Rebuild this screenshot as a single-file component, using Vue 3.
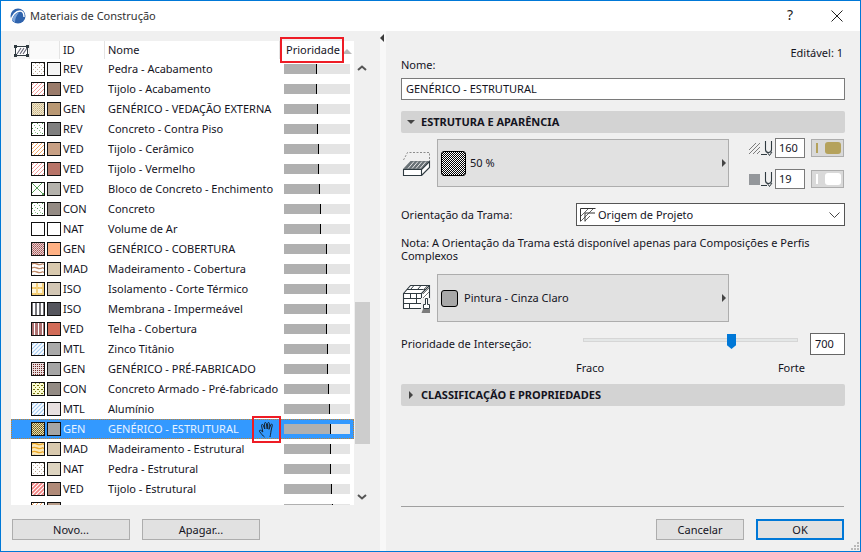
<script setup>
const rows = [
  ['REV', 'Pedra - Acabamento', 'dots', '#f4f4f4', 33],
  ['VED', 'Tijolo - Acabamento', 'diagred', '#9a7b6a', 33],
  ['GEN', 'GENÉRICO - VEDAÇÃO EXTERNA', 'weave', '#b99873', 34],
  ['REV', 'Concreto - Contra Piso', 'green', '#7f7f7f', 34],
  ['VED', 'Tijolo - Cerâmico', 'diagorange', '#c8a084', 35],
  ['VED', 'Tijolo - Vermelho', 'diagred', '#b87468', 35],
  ['VED', 'Bloco de Concreto - Enchimento', 'cross', '#b4b2ac', 36],
  ['CON', 'Concreto', 'green', '#948b84', 37],
  ['NAT', 'Volume de Ar', 'none', '#ffffff', 37],
  ['GEN', 'GENÉRICO - COBERTURA', 'checkred', '#ffb184', 43],
  ['MAD', 'Madeiramento - Cobertura', 'wavebrown', '#d8c9ae', 43],
  ['ISO', 'Isolamento - Corte Térmico', 'hex', '#d2c6b4', 43],
  ['ISO', 'Membrana - Impermeável', 'stripegray', '#55565e', 43],
  ['VED', 'Telha - Cobertura', 'stripered', '#d26c58', 43],
  ['MTL', 'Zinco Titânio', 'diagblue', '#a9a9a9', 44],
  ['GEN', 'GENÉRICO - PRÉ-FABRICADO', 'checkdark', '#a5a5a5', 44],
  ['CON', 'Concreto Armado - Pré-fabricado', 'olive', '#938b84', 45],
  ['MTL', 'Alumínio', 'diagblue', '#e8e0e0', 46],
  ['GEN', 'GENÉRICO - ESTRUTURAL', 'checkolive', '#a5a5a5', 47],
  ['MAD', 'Madeiramento - Estrutural', 'waveorange', '#d8c9ae', 47],
  ['NAT', 'Pedra - Estrutural', 'dots', '#ddd4c0', 47],
  ['VED', 'Tijolo - Estrutural', 'diagthick', '#b08a78', 48],
  ['VED', 'Bloco de Vedação - Estrutural', 'diagorange', '#b89c88', 49]
].map(([id, name, pattern, color, fill]) => ({ id, name, pattern, color, fill }))
const selectedIndex = 18
</script>

<template>
  <div class="window">
    <svg class="defs" width="0" height="0" aria-hidden="true">
      <defs>
        <pattern id="dots" width="4" height="4" patternUnits="userSpaceOnUse"><rect x="0" y="1" width="1" height="1" fill="#b5a08c"/><rect x="2" y="3" width="1" height="1" fill="#c9b8a6"/></pattern>
        <pattern id="green" width="5" height="5" patternUnits="userSpaceOnUse"><rect x="1" y="1" width="1" height="1" fill="#4f9a4f"/><rect x="3" y="3" width="1" height="1" fill="#7fb87f"/><rect x="4" y="0" width="1" height="1" fill="#a0c8a0"/></pattern>
        <pattern id="diagred" width="4" height="4" patternUnits="userSpaceOnUse"><path d="M-1 5L5 -1M-1 1L1 -1M3 5L5 3" stroke="#f59a9a" stroke-width="1"/></pattern>
        <pattern id="diagthick" width="4" height="4" patternUnits="userSpaceOnUse"><path d="M-1 5L5 -1M-1 1L1 -1M3 5L5 3" stroke="#f28080" stroke-width="1.7"/></pattern>
        <pattern id="diagorange" width="4" height="4" patternUnits="userSpaceOnUse"><path d="M-1 5L5 -1M-1 1L1 -1M3 5L5 3" stroke="#f5a868" stroke-width="1"/></pattern>
        <pattern id="diagblue" width="4" height="4" patternUnits="userSpaceOnUse"><path d="M-1 5L5 -1M-1 1L1 -1M3 5L5 3" stroke="#a4ccf4" stroke-width="1.2"/></pattern>
        <pattern id="weave" width="2" height="2" patternUnits="userSpaceOnUse"><rect width="2" height="2" fill="#efe6cc"/><rect width="1" height="1" fill="#c8b384"/><rect x="1" y="1" width="1" height="1" fill="#d8c8a0"/></pattern>
        <pattern id="cross" width="12" height="12" patternUnits="userSpaceOnUse"><path d="M0 0L12 12M12 0L0 12" stroke="#5aa05a" stroke-width="1"/></pattern>
        <pattern id="checkred" width="2" height="2" patternUnits="userSpaceOnUse"><rect width="2" height="2" fill="#e8d0d0"/><rect width="1" height="1" fill="#a85858"/><rect x="1" y="1" width="1" height="1" fill="#b87878"/></pattern>
        <pattern id="checkdark" width="2" height="2" patternUnits="userSpaceOnUse"><rect width="2" height="2" fill="#eadede"/><rect width="1" height="1" fill="#6e2828"/></pattern>
        <pattern id="checkolive" width="2" height="2" patternUnits="userSpaceOnUse"><rect width="2" height="2" fill="#e8dcb0"/><rect width="1" height="1" fill="#6a5a20"/><rect x="1" y="1" width="1" height="1" fill="#8a7a30"/></pattern>
        <pattern id="wavebrown" width="12" height="4" patternUnits="userSpaceOnUse"><path d="M0 2.500Q3 0.500 6 2T12 1.500" fill="none" stroke="#c08a68" stroke-width="1.400"/></pattern>
        <pattern id="waveorange" width="12" height="4" patternUnits="userSpaceOnUse"><rect width="12" height="4" fill="#fbe8b8"/><path d="M0 2.500Q3 0.500 6 2T12 1.500" fill="none" stroke="#eda92a" stroke-width="1.400"/></pattern>
        <pattern id="hex" width="6" height="6" patternUnits="userSpaceOnUse"><rect width="6" height="6" fill="#fff6dc"/><path d="M0 1.500L1.500 0H4.500L6 1.500V4.500L4.500 6H1.500L0 4.500Z" fill="none" stroke="#eaa818" stroke-width="1"/></pattern>
        <pattern id="stripegray" width="4" height="4" patternUnits="userSpaceOnUse"><rect width="2" height="4" fill="#76767c"/></pattern>
        <pattern id="stripered" width="4" height="4" patternUnits="userSpaceOnUse"><rect width="3" height="4" fill="#ad7070"/></pattern>
        <pattern id="olive" width="4" height="4" patternUnits="userSpaceOnUse"><rect width="4" height="4" fill="#fbfbd0"/><rect x="0" y="1" width="1" height="1" fill="#8a8a10"/><rect x="2" y="3" width="2" height="1" fill="#6e6e10"/></pattern>
      </defs>
    </svg>

    <header class="titlebar">
      <svg class="logo" width="16" height="16" viewBox="0 0 16 16">
        <circle cx="8" cy="8" r="7.500" fill="#2f63ad"/>
        <path d="M1 13C2 7 6 3 10 3c2 0 4 2 4 6" fill="none" stroke="#fff" stroke-width="1.400"/>
        <path d="M2 12C3 8 6 5 9 4.500 6 8 5 11 5 14.500Z" fill="#7ea5da"/>
      </svg>
      <span class="title">Materiais de Construção</span>
      <span class="help">?</span>
      <svg class="close" width="12" height="12" viewBox="0 0 12 12"><path d="M.5.5l11 11M11.500.5l-11 11" stroke="#222" stroke-width="1" fill="none"/></svg>
    </header>

    <div class="body">
      <section class="left">
        <div class="table-area">
          <div class="table">
            <div class="thead">
              <div class="th th-icon">
                <svg width="15" height="12" viewBox="0 0 15 12">
                  <rect x="1.500" y="1.500" width="12" height="9" fill="#fff" stroke="#2f3a40"/>
                  <path d="M3 9l4-6M6 9l4-6M9 9l4-6" stroke="#667" stroke-width="1.200"/>
                  <path d="M0 0h3v3H0zM12 0h3v3h-3zM0 9h3v3H0zM12 9h3v3h-3z" fill="#2f3a40"/>
                </svg>
              </div>
              <div class="th th-swatch"></div>
              <div class="th th-id">ID</div>
              <div class="th th-name">Nome</div>
              <div class="th th-prio">Prioridade<span class="sort"></span></div>
            </div>
            <div class="rows">
              <div
                v-for="(row, i) in rows"
                :key="i"
                class="row"
                :class="{ selected: i === selectedIndex }"
              >
                <svg class="chip" width="14" height="14" viewBox="0 0 14 14">
                  <rect x="0.500" y="0.500" width="13" height="13" fill="#fff" stroke="#111"/>
                  <rect v-if="row.pattern !== 'none'" x="1" y="1" width="12" height="12" :fill="`url(#${row.pattern})`"/>
                </svg>
                <span class="fill-chip" :style="{ background: row.color }"></span>
                <span class="cell-id">{{ row.id }}</span>
                <span class="cell-name">{{ row.name }}</span>
                <span class="bar">
                  <span class="bar-fill" :style="{ width: row.fill + 'px' }"></span>
                </span>
              </div>
            </div>
            <div class="annot annot-prio"></div>
            <div class="annot annot-hand">
              <svg width="18" height="17" viewBox="0 0 18 17">
                <path d="M6.500 16c-1.500-1-3-3-5-5.500-.6-1 .6-1.800 1.500-1l1.800 1.500L3.500 4.500c-.2-1.200 1.300-1.500 1.700-.4L6.800 8 6.500 2.500c0-1.200 1.600-1.300 1.800-.1L9.200 8 9.700 2.300c.2-1.100 1.700-1 1.700.2L11 8.300l1.800-4.600c.4-1 1.800-.6 1.500.5L13 10c-.3 2.500-.5 4-1 6" fill="none" stroke="#16222e" stroke-width="1"/>
              </svg>
            </div>
          </div>
          <div class="scrollbar">
            <svg class="sb-up" width="10" height="6" viewBox="0 0 10 6"><path d="M1 5l4-3.500L9 5" fill="none" stroke="#555" stroke-width="2"/></svg>
            <div class="sb-thumb"></div>
            <svg class="sb-down" width="10" height="6" viewBox="0 0 10 6"><path d="M1 1l4 3.500L9 1" fill="none" stroke="#555" stroke-width="2"/></svg>
          </div>
        </div>
        <div class="left-buttons">
          <button class="btn btn-left">Novo...</button>
          <button class="btn btn-left">Apagar...</button>
        </div>
      </section>

      <div class="splitter"><span class="split-arrow"></span></div>

      <section class="right">
        <div class="head">
          <label class="name-label">Nome:</label>
          <span class="editable">Editável: 1</span>
        </div>
        <div class="field name-field">GENÉRICO - ESTRUTURAL</div>

        <div class="section-head">
          <span class="tri-down"></span>ESTRUTURA E APARÊNCIA
        </div>

        <div class="struct-row">
          <svg class="big-icon" width="30" height="30" viewBox="0 0 30 30">
            <path d="M2.500 13L6.500 5.500H28.500V18" fill="none" stroke="#8c8c8c" stroke-dasharray="2 1.500"/>
            <path d="M2 22L9.500 14H28.500L20.500 22Z" fill="#6a7277"/>
            <path d="M7 21.500l6-7M11 21.500l6-7M15 21.500l6-7M19 21.500l6-7" stroke="#e8e8e8" stroke-width="1"/>
            <path d="M2.500 22.500H20.500V28.500H2.500ZM20.500 22.500L28.500 14.500V20.500L20.500 28.500" fill="#fff" stroke="#2f3a40" stroke-width="1.100"/>
          </svg>
          <button class="wide-btn">
            <span class="fill-sample checker"></span>
            <span class="wide-text pct">50 %</span>
            <span class="tri-right"></span>
          </button>
          <div class="pens">
            <div class="pen-row">
              <svg width="26" height="18" viewBox="0 0 26 18">
                <path d="M0 11L7 4M0 15L11 4M4 15L11 8M8 15L11 12" stroke="#7c7c7c" stroke-width="1"/>
                <path d="M16.500 2V10.500a3 3 0 0 0 6 0V2" fill="none" stroke="#2f3a40" stroke-width="1.100"/>
                <path d="M12 15.500H18M18 13l2.500 3.500L23 13" fill="none" stroke="#2f3a40" stroke-width="1"/>
              </svg>
              <span class="pen-input">160</span>
              <span class="pen-color"><i class="pen-line gold"></i><i class="pen-blob gold"></i></span>
            </div>
            <div class="pen-row">
              <svg width="26" height="18" viewBox="0 0 26 18">
                <rect x="0" y="4" width="11" height="11" fill="#94979b"/>
                <path d="M16.500 2V10.500a3 3 0 0 0 6 0V2" fill="none" stroke="#2f3a40" stroke-width="1.100"/>
                <path d="M12 15.500H18M18 13l2.500 3.500L23 13" fill="none" stroke="#2f3a40" stroke-width="1"/>
              </svg>
              <span class="pen-input">19</span>
              <span class="pen-color"><i class="pen-line white"></i><i class="pen-blob white"></i></span>
            </div>
          </div>
        </div>

        <div class="orient-row">
          <span class="orient-label">Orientação da Trama:</span>
          <div class="select">
            <svg width="16" height="14" viewBox="0 0 16 14">
              <path d="M.5 13.500V.5H15.500" fill="none" stroke="#333"/>
              <path d="M1 8L8 1M1 13L13 1M5 13L10 8" stroke="#666" stroke-width="1"/>
              <path d="M5 13.500V5H15" fill="none" stroke="#333"/>
            </svg>
            <span class="select-text">Origem de Projeto</span>
            <svg class="chev" width="11" height="6" viewBox="0 0 11 6"><path d="M.5.5l5 5 5-5" fill="none" stroke="#444"/></svg>
          </div>
        </div>

        <p class="note">Nota: A Orientação da Trama está disponível apenas para Composições e Perfis Complexos</p>

        <div class="struct-row surface-row">
          <svg class="big-icon brick" width="30" height="30" viewBox="0 0 30 30">
            <path d="M2.500 9.500L9.500 1.500H28.500V16L20.500 24.500H2.500ZM2.500 9.500H20.500V24.500M20.500 9.500L28.500 1.500" fill="#fff" stroke="#2f3a40" stroke-width="1.100"/>
            <path d="M2.500 14.500H20.500M2.500 19.500H20.500M9.500 9.500V14.500M15.500 14.500V19.500M8.500 19.500V24.500M15.500 9.500V14.500M6 5.500H24.500M13 1.500L9.500 5.500M20 1.500L16.500 5.500" stroke="#2f3a40" fill="none" stroke-width="1"/>
            <path d="M22 6L26 2M22 10L28 4M22 14L28 8" stroke="#777"/>
            <rect x="20" y="14" width="9" height="15" fill="#f0f0f0"/>
            <path d="M24.500 14.500h2v6h2v4h-6v-4h2Z" fill="#fff" stroke="#2f3a40"/>
            <path d="M22 25H29V29H20.500Z" fill="#7c7c7c"/>
          </svg>
          <button class="wide-btn">
            <span class="fill-sample gray"></span>
            <span class="wide-text">Pintura - Cinza Claro</span>
            <span class="tri-right"></span>
          </button>
        </div>

        <div class="slider-row">
          <span class="slider-label">Prioridade de Interseção:</span>
          <div class="track"><span class="thumb"></span></div>
          <span class="slider-input">700</span>
        </div>
        <div class="slider-scale"><span>Fraco</span><span>Forte</span></div>

        <div class="section-head second">
          <span class="tri-small"></span>CLASSIFICAÇÃO E PROPRIEDADES
        </div>

        <div class="spacer"></div>
        <div class="footer">
          <button class="btn btn-foot">Cancelar</button>
          <button class="btn btn-foot primary">OK</button>
        </div>
      </section>
      <svg class="grip" width="10" height="10" viewBox="0 0 10 10">
        <path d="M7 1h2v2H7zM4 4h2v2H4zM7 4h2v2H7zM1 7h2v2H1zM4 7h2v2H4zM7 7h2v2H7z" fill="#b8b8b8"/>
      </svg>
    </div>
  </div>
</template>

<style>
html, body { margin: 0; padding: 0; background: #fff; }
</style>

<style scoped>
.window {
  position: relative;
  width: 861px;
  height: 552px;
  box-sizing: border-box;
  border: 1px solid #0078d7;
  display: flex;
  flex-direction: column;
  overflow: hidden;
  font-family: "Noto Sans", "DejaVu Sans", sans-serif;
  font-size: 11px;
  line-height: 14px;
  color: #14141e;
  background: #f0f0f0;
}
.defs { position: absolute; }
.titlebar {
  height: 30px;
  flex: none;
  background: #fff;
  display: flex;
  align-items: center;
  padding-left: 9px;
}
.logo { margin-right: 4px; margin-top: 0; }
.title { font-size: 11px; color: #333; }
.help { margin-left: auto; font-size: 14px; margin-right: 38px; color: #222; margin-top: -2px; }
.close { margin-right: 17px; }
.body { flex: 1; display: flex; position: relative; min-height: 0; }

.left { width: 379px; flex: none; padding: 10px 0 0 10px; box-sizing: border-box; }
.table-area { display: flex; height: 464px; }
.table { position: relative; width: 343px; height: 464px; background: #fff; flex: none; }
.thead { display: flex; height: 18px; background: #f7f7f7; }
.th { height: 18px; line-height: 18px; box-sizing: border-box; border-right: 1px solid #e4e4e4; background: #fff; }
.th-icon { width: 19px; background: #f5f5f5; padding: 3px 0 0 3px; }
.th-swatch { width: 30px; background: #fafafa; }
.th-id { width: 45px; padding-left: 3px; }
.th-name { width: 175px; padding-left: 3px; }
.th-prio { flex: 1; padding-left: 6px; border-right: 0; position: relative; }
.sort {
  position: absolute; right: 2px; top: 8px;
  border: 5px solid transparent; border-top: 0; border-bottom: 5px solid #b8b8b8;
}
.rows { height: 446px; overflow: hidden; }
.row {
  height: 20px;
  display: flex;
  align-items: center;
  padding-left: 20px;
  box-sizing: border-box;
  overflow: hidden;
}
.row.selected {
  background: #3399ff;
  color: #e9f3ff;
  outline: 1px dotted #c8812a;
  outline-offset: -1px;
}
.chip { flex: none; display: block; }
.fill-chip {
  width: 14px; height: 14px; box-sizing: border-box;
  border: 1px solid #111; margin-left: 2px; flex: none;
}
.cell-id { width: 47px; padding-left: 2px; box-sizing: border-box; flex: none; }
.cell-name { width: 176px; flex: none; white-space: nowrap; overflow: visible; }
.bar { width: 66px; height: 10px; background: #e4e4e4; flex: none; display: block; }
.bar-fill {
  display: block; height: 100%; background: #b0b0b0;
  border-right: 1px solid #000; box-sizing: border-box;
}
.annot { position: absolute; box-sizing: border-box; border: 2px solid #ee1c25; }
.annot-prio { left: 269px; top: -4px; width: 64px; height: 26px; }
.annot-hand {
  left: 241px; top: 375px; width: 29px; height: 27px;
  display: flex; align-items: center; justify-content: center;
}

.scrollbar {
  position: relative; width: 15px; margin-left: 1px; flex: none;
}
.sb-up { position: absolute; left: 2px; top: 24px; }
.sb-down { position: absolute; left: 2px; top: 453px; }
.sb-thumb { position: absolute; left: 0; top: 261px; width: 15px; height: 142px; background: #cdcdcd; }

.left-buttons { display: flex; gap: 12px; margin-top: 14px; padding-left: 1px; }
.btn {
  font: inherit; color: inherit; padding: 0; margin: 0;
  background: #e1e1e1; border: 1px solid #adadad;
  height: 21px; box-sizing: border-box;
}
.btn-left { width: 118px; }

.splitter { width: 6px; flex: none; background: #f8f8f8; position: relative; }
.split-arrow {
  position: absolute; left: 0; top: 3px;
  border: 4px solid transparent; border-left: 0; border-right: 4px solid #3c3c3c;
}

.right {
  flex: 1; min-width: 0; display: flex; flex-direction: column;
  padding: 15px 15px 11px;
  background: #f0f0f0;
}
.head { display: flex; justify-content: space-between; height: 32px; flex: none; }
.name-label { align-self: flex-end; margin-bottom: 6px; }
.editable { margin-right: 2px; }
.field, .pen-input, .slider-input, .select {
  background: #fff; box-sizing: border-box; border: 1px solid #7a7a7a;
}
.name-field { height: 22px; line-height: 20px; padding-left: 4px; flex: none; }
.section-head {
  height: 22px; line-height: 22px; background: #d3d3d3; border-radius: 2px;
  margin-top: 11px; font-weight: 700; padding-left: 20px;
  position: relative; flex: none; letter-spacing: 0;
}
.tri-down {
  position: absolute; left: 6px; top: 9px;
  border: 4px solid transparent; border-bottom: 0; border-top: 4px solid #444;
}
.tri-small {
  position: absolute; left: 8px; top: 7px;
  border: 4px solid transparent; border-right: 0; border-left: 4px solid #444;
}
.section-head.second { margin-top: 9px; }
.struct-row { display: flex; margin-top: 6px; flex: none; height: 48px; }
.big-icon { width: 30px; margin: 8px 6px 0 0; flex: none; }
.big-icon.brick { margin-top: 10px; }
.wide-btn {
  width: 292px; height: 48px; box-sizing: border-box; padding: 0 0 0 3px; margin: 0;
  background: #e1e1e1; border: 1px solid #adadad;
  display: flex; align-items: center; font: inherit; color: inherit;
  position: relative; text-align: left;
}
.fill-sample {
  width: 25px; height: 25px; box-sizing: border-box;
  border: 1px solid #000; border-radius: 3px; flex: none;
}
.fill-sample.gray { width: 17px; height: 17px; background: #a8a8a8; margin-left: 0; }
.checker {
  background: repeating-conic-gradient(#000 0 25%, #fff 0 50%) 0 0 / 2px 2px;
}
.wide-text { margin-left: 6px; }
.wide-text.pct { margin-left: 4px; }
.tri-right {
  position: absolute; right: 2px; top: 19px;
  border: 4px solid transparent; border-right: 0; border-left: 4px solid #444;
}
.pens { margin-left: auto; margin-top: -1px; width: 96px; display: flex; flex-direction: column; gap: 11px; }
.pen-row { display: flex; align-items: center; height: 20px; }
.pen-input { width: 30px; height: 20px; line-height: 18px; padding-left: 3px; margin-right: 6px; flex: none; }
.pen-color {
  width: 33px; height: 18px; box-sizing: border-box; background: #d9d9d9;
  border: 1px solid #adadad; display: flex; align-items: center; padding-left: 4px;
}
.pen-line { width: 2px; height: 10px; margin-right: 7px; }
.pen-blob { width: 16px; height: 12px; border-radius: 3px; }
.gold { background: #b5a25c; }
.white { background: #fff; }

.orient-row { display: flex; align-items: center; margin-top: 16px; height: 23px; flex: none; }
.orient-label { width: 175px; flex: none; }
.select {
  width: 269px; height: 23px; display: flex; align-items: center;
  padding-left: 3px; border-color: #555;
}
.select-text { margin-left: 2px; }
.chev { margin-left: auto; margin-right: 4px; }
.note { margin: 10px 0 0; line-height: 13px; height: 26px; flex: none; }
.surface-row { margin-top: 12px; }
.slider-row { display: flex; align-items: center; margin-top: 11px; height: 22px; flex: none; }
.slider-label { width: 182px; flex: none; }
.track {
  width: 215px; height: 4px; background: #e4e7e7; border: 1px solid #d6d6d6;
  box-sizing: border-box; position: relative; margin-top: -8px; flex: none;
}
.thumb {
  position: absolute; left: 143px; top: -5px; width: 9px; height: 15px;
  background: #0078d7;
  clip-path: polygon(0 0, 100% 0, 100% 75%, 50% 100%, 0 75%);
}
.slider-input {
  width: 35px; height: 22px; line-height: 20px; padding-left: 4px;
  margin-left: 12px; flex: none; border-color: #666;
}
.slider-scale {
  display: flex; justify-content: space-between; margin-top: 6px;
  padding: 0 40px 0 175px; height: 14px; flex: none;
}
.spacer { flex: 1; }
.footer {
  display: flex; justify-content: flex-end; gap: 12px; border-top: 1px solid #a0a0a0;
  padding-top: 12px; margin-right: 1px; flex: none;
}
.btn-foot { width: 88px; }
.btn-foot.primary { border: 2px solid #0078d7; }
.grip { position: absolute; right: 0; bottom: 0; }
</style>
